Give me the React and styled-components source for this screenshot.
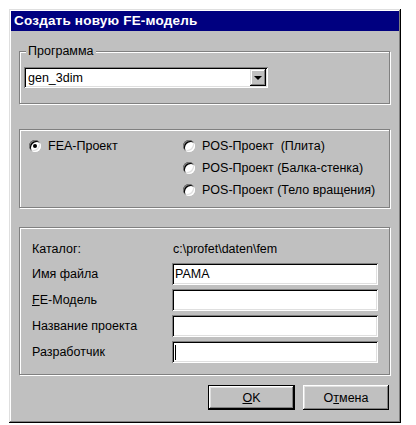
import React from 'react';
import styled, { createGlobalStyle } from 'styled-components';

const GlobalStyle = createGlobalStyle`
  body {
    margin: 0;
    background: #fff;
    font-family: "Liberation Sans", Arial, sans-serif;
    font-size: 12.5px;
    color: #000;
  }
`;

const Window = styled.div`
  box-sizing: border-box;
  width: 392px;
  height: 414px;
  margin: 9px 0 0 9px;
  padding: 2px;
  background: #c0c0c0;
  box-shadow: inset -1px -1px #000, inset 1px 1px #dfdfdf,
    inset -2px -2px #808080, inset 2px 2px #fff;
  display: flex;
  flex-direction: column;
`;

const TitleBar = styled.div`
  height: 20px;
  line-height: 20px;
  padding-left: 3px;
  background: #000080;
  color: #fff;
  font-weight: bold;
  font-size: 13.5px;
  letter-spacing: 0.2px;
`;

const Body = styled.div`
  padding: 20px 9px 0 8px;
  display: flex;
  flex-direction: column;
`;

const Group = styled.div`
  position: relative;
  box-sizing: border-box;
  height: ${p => p.$h}px;
  margin-top: ${p => p.$mt || 0}px;
  padding: ${p => p.$pad};
  border: 1px solid #808080;
  box-shadow: inset 1px 1px #fff, 1px 1px #fff;
`;

const Legend = styled.span`
  position: absolute;
  top: -8px;
  left: 6px;
  padding: 0 2px;
  line-height: 14px;
  background: #c0c0c0;
`;

const Combo = styled.div`
  box-sizing: border-box;
  width: 244px;
  height: 21px;
  padding: 2px 2px 2px 4px;
  display: flex;
  align-items: center;
  background: #fff;
  box-shadow: inset 1px 1px #808080, inset -1px -1px #fff,
    inset 2px 2px #000, inset -2px -2px #dfdfdf;
`;

const ComboText = styled.span`
  flex: 1;
`;

const ComboButton = styled.div`
  box-sizing: border-box;
  width: 16px;
  height: 17px;
  display: flex;
  align-items: center;
  justify-content: center;
  background: #c0c0c0;
  box-shadow: inset -1px -1px #000, inset 1px 1px #dfdfdf,
    inset -2px -2px #808080, inset 2px 2px #fff;

  &::after {
    content: "";
    border-left: 4px solid transparent;
    border-right: 4px solid transparent;
    border-top: 4px solid #000;
    margin-top: 1px;
  }
`;

const RadioGrid = styled.div`
  display: grid;
  grid-template-columns: 154px auto;
  grid-template-rows: repeat(3, 21px);
  row-gap: 1px;
`;

const Option = styled.label`
  grid-column: ${p => p.$col};
  grid-row: ${p => p.$row};
  display: flex;
  align-items: center;
  gap: 7px;
  white-space: pre;
`;

const RadioDot = styled.span`
  position: relative;
  width: 12px;
  height: 12px;
  border-radius: 50%;
  background: #fff;
  box-shadow: inset 1px 1px #808080, inset -1px -1px #fff,
    inset 2px 2px #000, inset -2px -2px #dfdfdf;

  &::after {
    content: "";
    display: ${p => (p.$on ? 'block' : 'none')};
    position: absolute;
    left: 4px;
    top: 4px;
    width: 4px;
    height: 4px;
    border-radius: 50%;
    background: #000;
  }
`;

const FormGrid = styled.div`
  display: grid;
  grid-template-columns: 140px 206px;
  grid-template-rows: 20px repeat(4, 22px);
  row-gap: 4px;
  align-items: center;
`;

const Label = styled.span`
  white-space: nowrap;
`;

const Value = styled.span`
  padding-left: 1px;
`;

const Field = styled.div`
  box-sizing: border-box;
  height: 22px;
  padding: 2px 3px;
  display: flex;
  align-items: center;
  background: #fff;
  box-shadow: inset 1px 1px #808080, inset -1px -1px #fff,
    inset 2px 2px #000, inset -2px -2px #dfdfdf;
`;

const Caret = styled.span`
  width: 1px;
  height: 15px;
  background: #000;
`;

const U = styled.span`
  text-decoration: underline;
`;

const ButtonRow = styled.div`
  margin-top: 10px;
  padding-right: 1px;
  display: flex;
  justify-content: flex-end;
  gap: 8px;
`;

const Button = styled.button`
  box-sizing: border-box;
  width: ${p => p.$w}px;
  height: 25px;
  padding: 0;
  font-family: inherit;
  font-size: 12.5px;
  color: #000;
  background: #c0c0c0;
  border: ${p => (p.$default ? '1px solid #000' : 'none')};
  box-shadow: inset -1px -1px #000, inset 1px 1px #fff,
    inset -2px -2px #808080, inset 2px 2px #dfdfdf;
`;

export default function App() {
  return (
    <>
      <GlobalStyle />
      <Window>
        <TitleBar>Создать новую FE-модель</TitleBar>
        <Body>
          <Group $h={53} $pad="15px 0 0 4px">
            <Legend>Программа</Legend>
            <Combo>
              <ComboText>gen_3dim</ComboText>
              <ComboButton />
            </Combo>
          </Group>

          <Group $h={79} $mt={25} $pad="5px 0 0 9px">
            <RadioGrid>
              <Option $col={1} $row={1}>
                <RadioDot $on />
                FEA-Проект
              </Option>
              <Option $col={2} $row={1}>
                <RadioDot />
                POS-Проект  (Плита)
              </Option>
              <Option $col={2} $row={2}>
                <RadioDot />
                POS-Проект (Балка-стенка)
              </Option>
              <Option $col={2} $row={3}>
                <RadioDot />
                POS-Проект (Тело вращения)
              </Option>
            </RadioGrid>
          </Group>

          <Group $h={148} $mt={19} $pad="11px 0 0 12px">
            <FormGrid>
              <Label>Каталог:</Label>
              <Value>c:\profet\daten\fem</Value>
              <Label>Имя файла</Label>
              <Field>РАМА</Field>
              <Label><U>F</U>E-Модель</Label>
              <Field />
              <Label>Название проекта</Label>
              <Field />
              <Label>Разработчик</Label>
              <Field><Caret /></Field>
            </FormGrid>
          </Group>

          <ButtonRow>
            <Button $w={87} $default><U>O</U>K</Button>
            <Button $w={86}>О<U>т</U>мена</Button>
          </ButtonRow>
        </Body>
      </Window>
    </>
  );
}
